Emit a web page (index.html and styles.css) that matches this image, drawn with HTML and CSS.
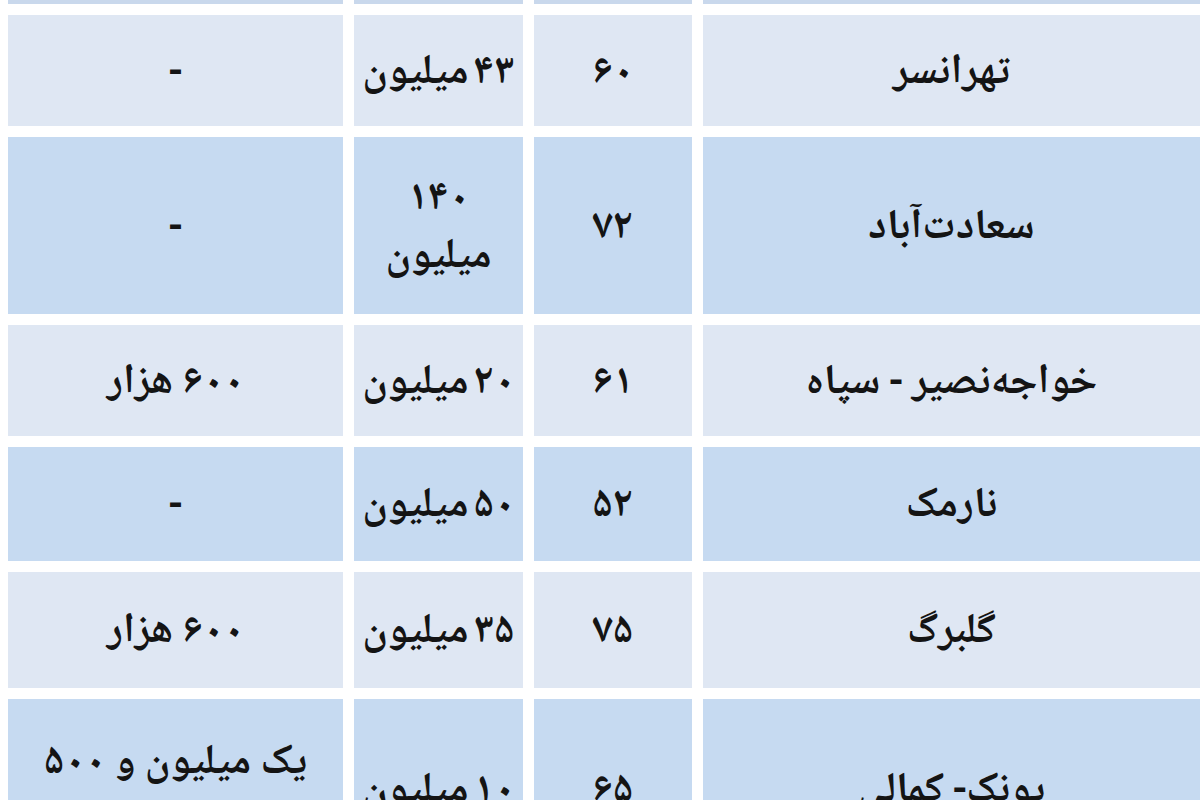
FILE: index.html
```html
<!DOCTYPE html>
<html lang="fa" dir="rtl">
<head>
<meta charset="utf-8">
<title>جدول قیمت</title>
<link rel="stylesheet" href="styles.css">
</head>
<body>
<div class="table">
  <div class="cell blue strip"></div><div class="cell blue strip"></div><div class="cell blue strip"></div><div class="cell blue strip"></div>

  <div class="cell light name">تهرانسر</div>
  <div class="cell light num">۶۰</div>
  <div class="cell light price">۴۳ میلیون</div>
  <div class="cell light rent">-</div>

  <div class="cell blue name">سعادت‌آباد</div>
  <div class="cell blue num">۷۲</div>
  <div class="cell blue price">۱۴۰<br>میلیون</div>
  <div class="cell blue rent">-</div>

  <div class="cell light name">خواجه‌نصیر - سپاه</div>
  <div class="cell light num">۶۱</div>
  <div class="cell light price">۲۰ میلیون</div>
  <div class="cell light rent">۶۰۰ هزار</div>

  <div class="cell blue name">نارمک</div>
  <div class="cell blue num">۵۲</div>
  <div class="cell blue price">۵۰ میلیون</div>
  <div class="cell blue rent">-</div>

  <div class="cell light name">گلبرگ</div>
  <div class="cell light num">۷۵</div>
  <div class="cell light price">۳۵ میلیون</div>
  <div class="cell light rent">۶۰۰ هزار</div>

  <div class="cell blue name">پونک- کمالی</div>
  <div class="cell blue num">۶۵</div>
  <div class="cell blue price">۱۰ میلیون</div>
  <div class="cell blue rent">یک میلیون و ۵۰۰<br>هزار</div>
</div>
</body>
</html>
```

FILE: styles.css
```css
html, body {
  margin: 0;
  padding: 0;
  background: #ffffff;
  overflow: hidden;
}

.table {
  direction: rtl;
  margin-left: 8px;
  display: grid;
  grid-template-columns: 497px 158px 169px 335px;
  grid-template-rows: 4px 111px 177px 111px 114px 116px 180px;
  column-gap: 11px;
  row-gap: 11px;
  font-family: "Noto Naskh Arabic", "Noto Sans Arabic", "DejaVu Sans", sans-serif;
  font-weight: bold;
  font-size: 42px;
  color: #141414;
}

.cell {
  display: flex;
  align-items: center;
  justify-content: center;
  text-align: center;
  line-height: 1.36;
  padding-top: 8px;
  white-space: nowrap;
}

.price {
  letter-spacing: -1px;
  word-spacing: -4px;
}

.light {
  background: #dfe7f3;
}

.blue {
  background: #c6daf1;
}

.strip {
  background: #c9d8ec;
  padding-top: 0;
}
```
